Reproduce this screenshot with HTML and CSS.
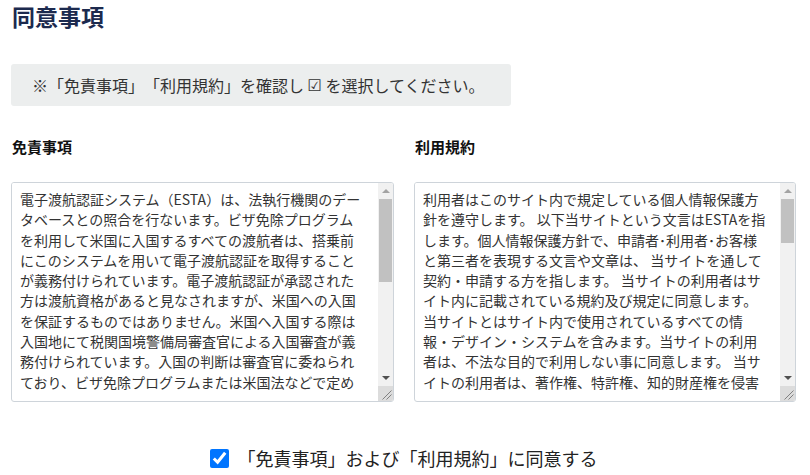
FILE: index.html
```html
<!DOCTYPE html>
<html lang="ja">

<head>
    <meta charset="UTF-8">
    <title>同意事項</title>
    <link rel="stylesheet" href="styles.css">
</head>

<body>
    <div id="page">
        <h1 class="page-title">同意事項</h1>

        <!-- Notice -->
        <div class="notice">※「免責事項」「利用規約」を確認し <span class="check-mark">☑</span> を選択してください。</div>

        <!-- Two columns: disclaimer and terms -->
        <div class="terms-grid">
            <div class="terms-col">
                <h2 class="terms-heading">免責事項</h2>
                <div class="terms-frame">
                    <textarea class="terms-box" readonly>電子渡航認証システム（ESTA）は、法執行機関のデータベースとの照合を行ないます。ビザ免除プログラムを利用して米国に入国するすべての渡航者は、搭乗前にこのシステムを用いて電子渡航認証を取得することが義務付けられています。電子渡航認証が承認された方は渡航資格があると見なされますが、米国への入国を保証するものではありません。米国へ入国する際は入国地にて税関国境警備局審査官による入国審査が義務付けられています。入国の判断は審査官に委ねられており、ビザ免除プログラムまたは米国法などで定められた理由により入国を拒否される場合があります。また、電子渡航認証の有効期間中であっても、米国国土安全保障省の判断により認証が取り消される場合があります。当サイトは申請代行サービスを提供するものであり、米国政府機関とは一切関係がありません。</textarea>
                    <div class="scrollbar" aria-hidden="true">
                        <div class="sb-btn">
                            <svg width="8" height="4" viewBox="0 0 8 4"><path d="M0 4L4 0L8 4Z" fill="#a3a3a3"/></svg>
                        </div>
                        <div class="sb-track"><div class="sb-thumb" style="height: 83px"></div></div>
                        <div class="sb-btn">
                            <svg width="8" height="4" viewBox="0 0 8 4"><path d="M0 0L4 4L8 0Z" fill="#505050"/></svg>
                        </div>
                        <div class="sb-corner">
                            <svg width="15" height="15" viewBox="0 0 15 15"><path d="M13.5 4.5L4.5 13.5M13.5 8.5L8.5 13.5" stroke="#808080" stroke-width="1"/></svg>
                        </div>
                    </div>
                </div>
            </div>
            <div class="terms-col">
                <h2 class="terms-heading">利用規約</h2>
                <div class="terms-frame">
                    <textarea class="terms-box" readonly>利用者はこのサイト内で規定している個人情報保護方針を遵守します。 以下当サイトという文言はESTAを指します。個人情報保護方針で、申請者･利用者･お客様と第三者を表現する文言や文章は、 当サイトを通して契約・申請する方を指します。 当サイトの利用者はサイト内に記載されている規約及び規定に同意します。当サイトとはサイト内で使用されているすべての情報・デザイン・システムを含みます。当サイトの利用者は、不法な目的で利用しない事に同意します。 当サイトの利用者は、著作権、特許権、知的財産権を侵害する行為を行わない事に同意します。 当サイトの利用者は、当サイトの運営を妨げる行為を行わない事に同意します。</textarea>
                    <div class="scrollbar" aria-hidden="true">
                        <div class="sb-btn">
                            <svg width="8" height="4" viewBox="0 0 8 4"><path d="M0 4L4 0L8 4Z" fill="#a3a3a3"/></svg>
                        </div>
                        <div class="sb-track"><div class="sb-thumb" style="height: 44px"></div></div>
                        <div class="sb-btn">
                            <svg width="8" height="4" viewBox="0 0 8 4"><path d="M0 0L4 4L8 0Z" fill="#505050"/></svg>
                        </div>
                        <div class="sb-corner">
                            <svg width="15" height="15" viewBox="0 0 15 15"><path d="M13.5 4.5L4.5 13.5M13.5 8.5L8.5 13.5" stroke="#808080" stroke-width="1"/></svg>
                        </div>
                    </div>
                </div>
            </div>
        </div>

        <!-- Agree checkbox -->
        <label class="agree-row">
            <input type="checkbox" class="agree-check" checked>
            <span>「免責事項」および「利用規約」に同意する</span>
        </label>
    </div>
</body>

</html>
```

FILE: styles.css
```css
/* Basic reset */
body,
html {
    margin: 0;
    padding: 0;
    background: #fff;
    font-family: "Noto Sans CJK JP", "Noto Sans", sans-serif;
    color: #212529;
    text-spacing-trim: space-all;
}

#page {
    padding: 0 14px 0 11px;
}

/* Title */
.page-title {
    margin: 0;
    padding-left: 1px;
    font-size: 23px;
    line-height: 32px;
    font-weight: 700;
    color: #1c2a4e;
}

/* Notice box */
.notice {
    margin-top: 32px;
    width: 500px;
    box-sizing: border-box;
    height: 42px;
    padding: 0 0 0 21px;
    display: flex;
    align-items: center;
    background-color: #eceeee;
    border-radius: 3px;
    font-size: 16px;
    color: #333;
    white-space: pre;
}

.check-mark {
    font-family: "DejaVu Sans", sans-serif;
    font-size: 16px;
}

/* Terms columns */
.terms-grid {
    display: grid;
    grid-template-columns: 383px 382px;
    gap: 20px;
    margin-top: 30px;
}

.terms-heading {
    margin: 0 0 24px;
    padding-left: 1px;
    font-size: 15px;
    line-height: 22px;
    font-weight: 700;
    color: #111;
}

/* Textarea frame with its scrollbar */
.terms-frame {
    display: flex;
    align-items: flex-start;
    height: 220px;
    box-sizing: border-box;
    border: 1px solid #ced4da;
    border-radius: 3px;
    overflow: hidden;
    background: #fff;
}

.terms-box {
    flex: 1;
    min-width: 0;
    height: 209px;
    box-sizing: border-box;
    margin: 0;
    padding: 6px 12px 0 8px;
    border: none;
    outline: none;
    font-family: "Noto Sans CJK JP", sans-serif;
    font-size: 14px;
    line-height: 20.3px;
    color: #333;
    text-spacing-trim: space-all;
    resize: none;
    overflow: hidden;
}

.scrollbar {
    width: 15px;
    height: 100%;
    flex-shrink: 0;
    display: flex;
    flex-direction: column;
    background: #f1f1f1;
}

.sb-btn {
    height: 16px;
    display: flex;
    align-items: center;
    justify-content: center;
}

.sb-btn + .sb-track + .sb-btn {
    height: 17px;
}

.sb-track {
    flex: 1;
    padding: 0 1px;
}

.sb-thumb {
    background: #c1c1c1;
}

.sb-corner {
    height: 15px;
    background: #dcdcdc;
}

.sb-corner svg {
    display: block;
}

/* Agree row */
.agree-row {
    display: flex;
    justify-content: center;
    align-items: center;
    gap: 9px;
    margin-top: 43px;
    font-size: 18px;
    color: #222;
}

.agree-check {
    width: 19px;
    height: 19px;
    margin: 0;
}
```
